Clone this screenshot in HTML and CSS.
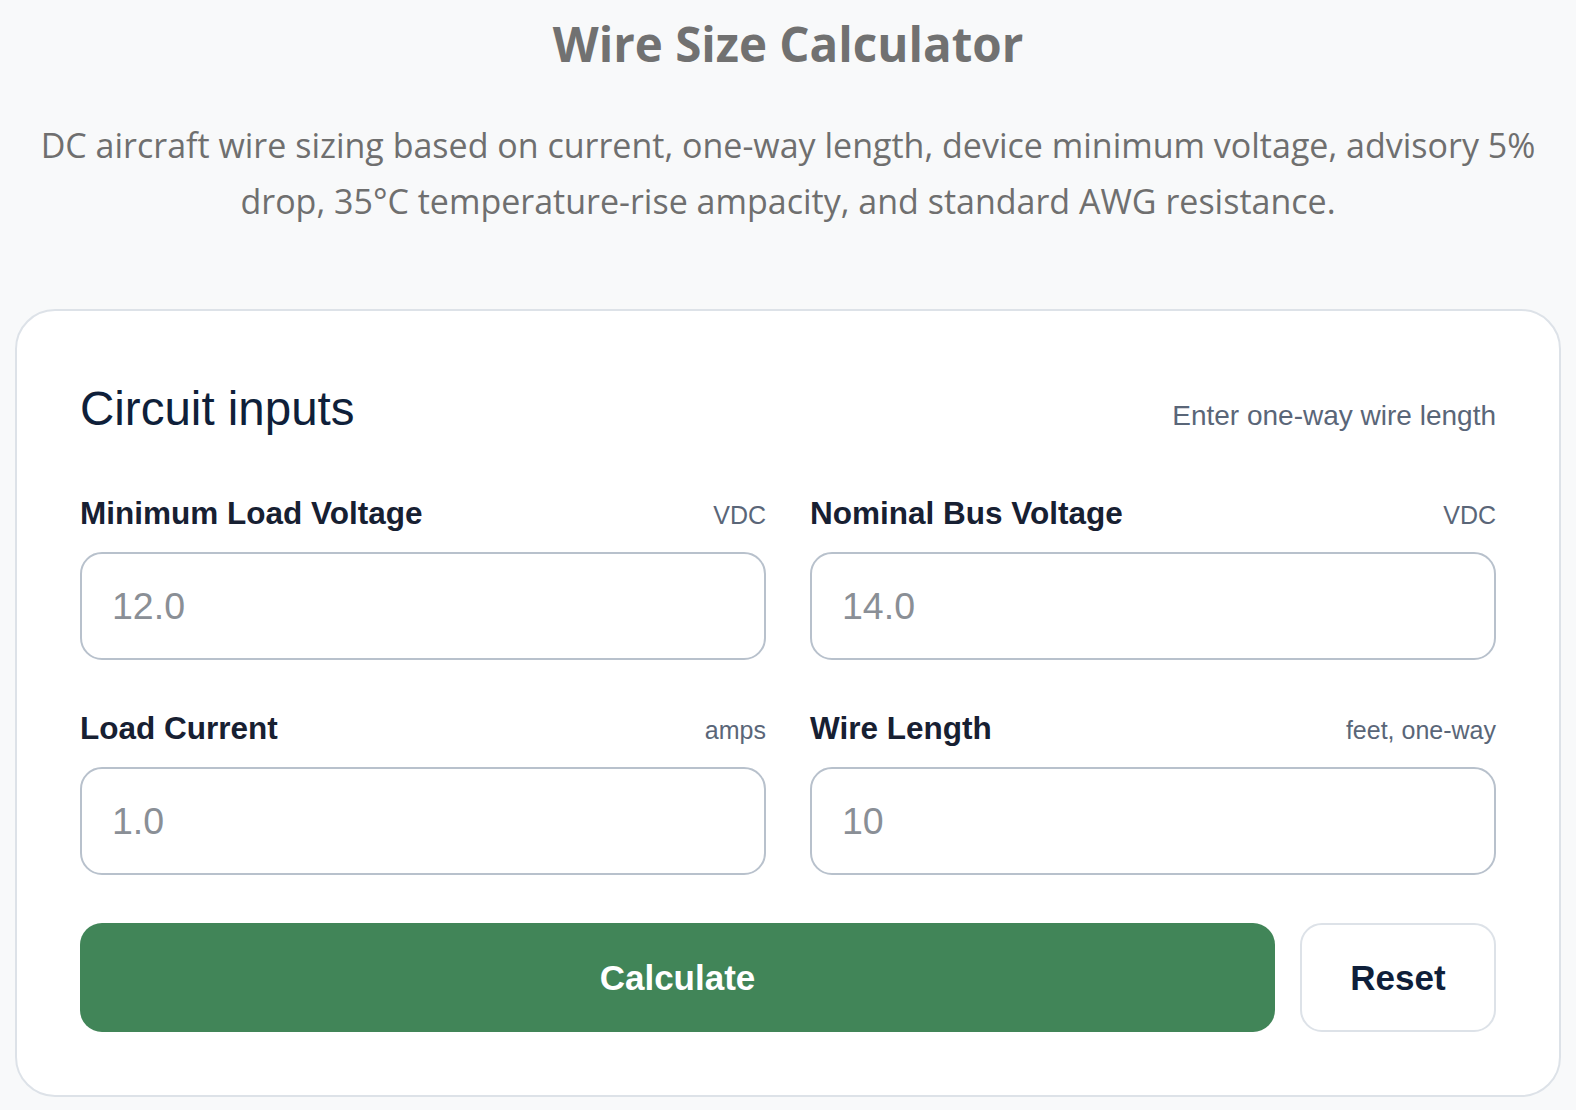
FILE: index.html
```html
<!DOCTYPE html>
<html lang="en">
<head>
  <meta charset="UTF-8" />
  <title>Wire Size Calculator</title>
  <link rel="stylesheet" href="styles.css">
</head>
<body>
  <div class="page">
    <h1>Wire Size Calculator</h1>
    <p class="intro">DC aircraft wire sizing based on current, one-way length, device minimum voltage, advisory 5% drop, 35°C temperature-rise ampacity, and standard AWG resistance.</p>

    <div class="card">
      <div class="card-head">
        <h2>Circuit inputs</h2>
        <span class="hint">Enter one-way wire length</span>
      </div>

      <div class="grid">
        <div class="field">
          <div class="field-top">
            <label for="vmin">Minimum Load Voltage</label>
            <span class="unit">VDC</span>
          </div>
          <input id="vmin" type="text" placeholder="12.0">
        </div>
        <div class="field">
          <div class="field-top">
            <label for="vbus">Nominal Bus Voltage</label>
            <span class="unit">VDC</span>
          </div>
          <input id="vbus" type="text" placeholder="14.0">
        </div>
        <div class="field">
          <div class="field-top">
            <label for="amps">Load Current</label>
            <span class="unit">amps</span>
          </div>
          <input id="amps" type="text" placeholder="1.0">
        </div>
        <div class="field">
          <div class="field-top">
            <label for="len">Wire Length</label>
            <span class="unit">feet, one-way</span>
          </div>
          <input id="len" type="text" placeholder="10">
        </div>
      </div>

      <div class="actions">
        <button class="btn-calc">Calculate</button>
        <button class="btn-reset">Reset</button>
      </div>
    </div>
  </div>
</body>
</html>
```

FILE: styles.css
```css
body {
  margin: 0;
  background: #f8f9fa;
  font-family: "Liberation Sans", Arial, sans-serif;
}
.page {
  padding-top: 14px;
}
h1 {
  margin: 0;
  text-align: center;
  font-family: "Open Sans", sans-serif;
  font-size: 47.5px;
  font-weight: 700;
  color: #717171;
  line-height: 60px;
}
.intro {
  margin: 43px 20px 0;
  text-align: center;
  font-family: "Open Sans", sans-serif;
  font-size: 34px;
  line-height: 56px;
  color: #6f6f6f;
}
.card {
  margin: 80px 15px 0;
  background: #fff;
  border: 2px solid #dde2e8;
  border-radius: 40px;
  padding: 70px 63px 63px;
}
.card-head {
  display: flex;
  justify-content: space-between;
  align-items: baseline;
  margin-bottom: 58px;
}
h2 {
  margin: 0;
  font-size: 47.5px;
  font-weight: 400;
  color: #0f1f3a;
  line-height: 56px;
}
.hint {
  font-size: 28px;
  color: #5a6678;
}
.grid {
  display: grid;
  grid-template-columns: 1fr 1fr;
  column-gap: 44px;
  row-gap: 50px;
}
.field-top {
  display: flex;
  justify-content: space-between;
  align-items: baseline;
  margin-bottom: 20px;
}
label {
  font-size: 31.5px;
  font-weight: 700;
  color: #172032;
}
.unit {
  font-size: 25px;
  color: #5a6678;
}
input {
  box-sizing: border-box;
  display: block;
  width: 100%;
  height: 108px;
  border: 2px solid #b8c1cc;
  border-radius: 22px;
  padding: 0 30px;
  font-family: "Liberation Sans", Arial, sans-serif;
  font-size: 37.5px;
  color: #222;
  background: #fff;
}
input::placeholder {
  color: #8a8f96;
}
.actions {
  display: flex;
  gap: 25px;
  margin-top: 48px;
}
button {
  height: 109px;
  border-radius: 22px;
  font-family: "Liberation Sans", Arial, sans-serif;
  font-size: 35px;
  font-weight: 700;
  cursor: pointer;
}
.btn-calc {
  flex: 1;
  background: #418558;
  color: #fff;
  border: none;
}
.btn-reset {
  width: 196px;
  background: #fff;
  color: #0f1f3a;
  border: 2px solid #dde2e8;
}
```
